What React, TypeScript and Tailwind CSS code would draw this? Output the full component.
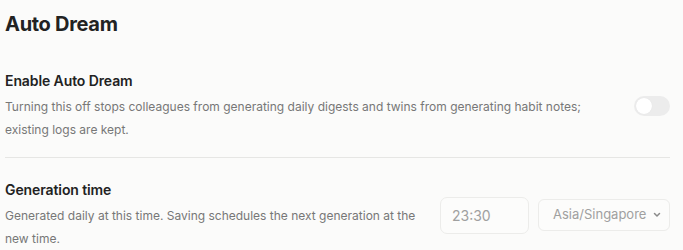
import React from "react";

export default function App() {
  return (
    <div className="min-h-[250px] w-full bg-[#fbfbfa] pl-[5px] pr-[13px] pt-[10px] text-[#222] [font-family:Inter,'Noto_Sans',sans-serif]">
      <h1 className="text-[20px] font-bold leading-[28px] tracking-[-0.3px] text-[#222]">Auto Dream</h1>

      <div className="mt-[33px] flex items-center gap-5">
        <div className="flex-1">
          <div className="text-[14px] font-semibold leading-[20px] tracking-[-0.1px] text-[#222]">Enable Auto Dream</div>
          <p className="mt-[4px] text-[12px] leading-[23px] text-[#777]">
            Turning this off stops colleagues from generating daily digests and twins from generating habit notes; existing logs are kept.
          </p>
        </div>
        <button
          type="button"
          className="flex h-[20px] w-[36px] shrink-0 items-center rounded-full bg-[#ececec] p-[2px]"
        >
          <span className="block h-[16px] w-[16px] rounded-full bg-white shadow-[0_0_1px_rgba(0,0,0,0.08)]" />
        </button>
      </div>

      <div className="mt-[16px] h-px w-full bg-[#e6e6e4]" />

      <div className="mt-[22px] flex items-center gap-5">
        <div className="flex-1">
          <div className="text-[14px] font-semibold leading-[20px] tracking-[-0.1px] text-[#222]">Generation time</div>
          <p className="mt-[4px] text-[12px] leading-[23px] text-[#777]">
            Generated daily at this time. Saving schedules the next generation at the new time.
          </p>
        </div>
        <div className="flex shrink-0 items-center gap-[9px]">
          <div className="flex h-[37px] w-[89px] items-center rounded-[7px] border border-[#ececea] bg-[#fcfcfb] pl-[11px] text-[14px] text-[#a0a0a0]">
            23:30
          </div>
          <div className="flex h-[32px] w-[132px] items-center justify-between rounded-[6px] border border-[#ececea] bg-[#fcfcfb] pl-[14px] pr-[7px] text-[13px] text-[#a0a0a0]">
            <span>Asia/Singapore</span>
            <svg width="10" height="10" viewBox="0 0 10 10" fill="none">
              <path d="M2.5 3.5 L5 6 L7.5 3.5" stroke="#8a8a8a" strokeWidth="1.5" strokeLinecap="round" strokeLinejoin="round" />
            </svg>
          </div>
        </div>
      </div>
    </div>
  );
}
